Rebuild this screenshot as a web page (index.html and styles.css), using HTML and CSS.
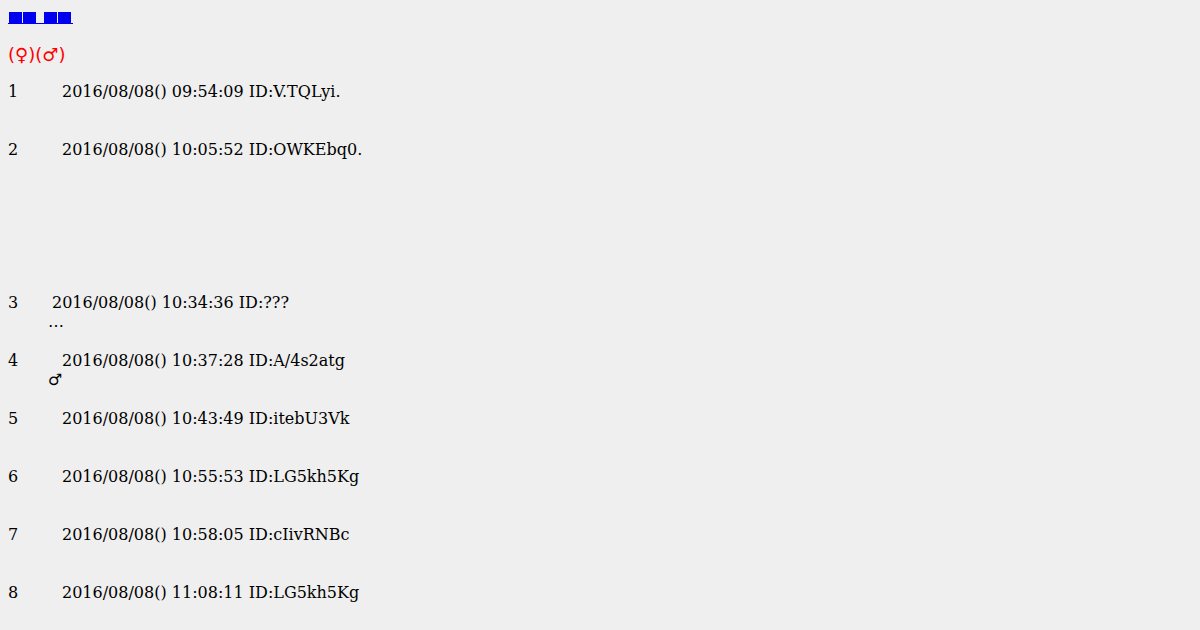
FILE: index.html
```html
<!DOCTYPE html>
<html lang="ja">
<head>
    <meta charset="UTF-8">
    <meta name="viewport" content="width=device-width, initial-scale=1.0">
    <title>(♀)(♂)</title>
    <link rel="stylesheet" href="styles.css">
</head>
<body>
    <div class="nav">
        <a href="#" class="back"><span class="box"></span><span class="box"></span><span class="gap"></span><span class="box"></span><span class="box"></span></a>
    </div>

    <h1 class="title">(♀)(♂)</h1>

    <dl class="thread">
        <dt><span class="num">1</span><span class="date">2016/08/08() 09:54:09 ID:V.TQLyi.</span></dt>
        <dd>&nbsp;</dd>

        <dt><span class="num">2</span><span class="date">2016/08/08() 10:05:52 ID:OWKEbq0.</span></dt>
        <dd class="long">&nbsp;<br>&nbsp;<br>&nbsp;<br>&nbsp;<br>&nbsp;<br>&nbsp;</dd>

        <dt><span class="num">3</span><span class="date short">2016/08/08() 10:34:36 ID:???</span></dt>
        <dd>…</dd>

        <dt><span class="num">4</span><span class="date">2016/08/08() 10:37:28 ID:A/4s2atg</span></dt>
        <dd>♂</dd>

        <dt><span class="num">5</span><span class="date">2016/08/08() 10:43:49 ID:itebU3Vk</span></dt>
        <dd>&nbsp;</dd>

        <dt><span class="num">6</span><span class="date">2016/08/08() 10:55:53 ID:LG5kh5Kg</span></dt>
        <dd>&nbsp;</dd>

        <dt><span class="num">7</span><span class="date">2016/08/08() 10:58:05 ID:cIivRNBc</span></dt>
        <dd>&nbsp;</dd>

        <dt><span class="num">8</span><span class="date">2016/08/08() 11:08:11 ID:LG5kh5Kg</span></dt>
        <dd>&nbsp;</dd>
    </dl>
</body>
</html>
```

FILE: styles.css
```css
body {
    margin: 8px;
    background: #efefef;
    color: #000;
    font-family: "DejaVu Serif", serif;
    font-size: 16px;
}

.nav {
    display: flex;
    align-items: flex-start;
    height: 19px;
    padding-top: 4px;
}

.back {
    display: flex;
    gap: 1px;
    padding: 0 2px 0 1px;
    border-bottom: 1px solid #0000ee;
}

.back .box {
    width: 13px;
    height: 11px;
    background: #0000ee;
}

.back .gap {
    width: 6px;
}

.title {
    margin: 13px 0 0 0;
    color: #ff0000;
    font-family: "DejaVu Sans", sans-serif;
    font-size: 18px;
    font-weight: normal;
    line-height: 21px;
}

.thread {
    margin: 17px 0 0 0;
    line-height: 19.33px;
}

.thread dt {
    display: flex;
}

.thread .num {
    width: 54px;
}

.thread .date.short {
    margin-left: -10px;
}

.thread dd {
    margin: 0 0 19.33px 40px;
    font-family: "DejaVu Sans", sans-serif;
}

.thread dd.long {
    margin-bottom: 17.33px;
}
```
